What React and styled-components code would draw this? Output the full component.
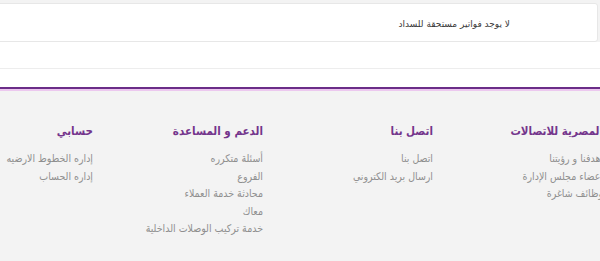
import React from 'react';
import styled, { createGlobalStyle } from 'styled-components';

const GlobalStyle = createGlobalStyle`
  html, body {
    margin: 0;
    padding: 0;
    background: #ffffff;
    font-family: "DejaVu Sans Condensed", "DejaVu Sans", sans-serif;
    overflow: hidden;
  }
  * { box-sizing: border-box; }
`;

const Page = styled.div`
  direction: rtl;
  width: 600px;
  height: 261px;
  overflow: hidden;
`;

const BillsArea = styled.div`
  background: #f3f3f3;
  padding-top: 3px;
`;

const Card = styled.div`
  height: 39px;
  margin-right: 2px;
  margin-left: -6px;
  background: #ffffff;
  border: 1px solid #e7e7e7;
  border-radius: 3px;
  display: flex;
  align-items: center;
  padding-right: 87px;
  padding-top: 2px;
  font-family: "DejaVu Sans", sans-serif;
  font-size: 9px;
  color: #3a3a3a;
`;

const Gap = styled.div`
  height: ${p => p.$h}px;
  background: #ffffff;
  border-bottom: ${p => (p.$line ? '1px solid #ededed' : 'none')};
`;

const Footer = styled.footer`
  background: #f3f3f3;
  border-top: 2px solid #6b2d88;
  box-shadow: inset 0 2px 0 #ecc8ef;
  height: 175px;
  padding-top: 32px;
`;

const Columns = styled.div`
  display: grid;
  grid-template-columns: repeat(4, 170px);
  margin-right: -3px;
`;

const Column = styled.div`
  display: flex;
  flex-direction: column;
`;

const Heading = styled.h4`
  margin: 0 0 9px;
  font-size: 11.5px;
  line-height: 20px;
  font-weight: bold;
  color: #74358c;
  white-space: nowrap;
`;

const FooterLink = styled.a`
  font-size: 10.5px;
  line-height: 17.6px;
  color: #8f8f8f;
  text-decoration: none;
  white-space: nowrap;
`;

const columns = [
  {
    title: 'المصرية للاتصالات',
    links: ['أهدفنا و رؤيتنا', 'أعضاء مجلس الإدارة', 'وظائف شاغرة'],
  },
  {
    title: 'اتصل بنا',
    links: ['اتصل بنا', 'ارسال بريد الكتروني'],
  },
  {
    title: 'الدعم و المساعدة',
    links: ['أسئلة متكرره', 'الفروع', 'محادثة خدمة العملاء', 'معاك', 'خدمة تركيب الوصلات الداخلية'],
  },
  {
    title: 'حسابي',
    links: ['إداره الخطوط الارضيه', 'إداره الحساب'],
  },
];

const App = () => {
  return (
    <Page>
      <GlobalStyle />
      <BillsArea>
        <Card>لا يوجد فواتير مستحقة للسداد</Card>
      </BillsArea>
      <Gap $h={27} $line />
      <Gap $h={18} />
      <Footer>
        <Columns>
          {columns.map(col => (
            <Column key={col.title}>
              <Heading>{col.title}</Heading>
              {col.links.map(l => (
                <FooterLink key={l} href="#">{l}</FooterLink>
              ))}
            </Column>
          ))}
        </Columns>
      </Footer>
    </Page>
  );
};

export default App;
